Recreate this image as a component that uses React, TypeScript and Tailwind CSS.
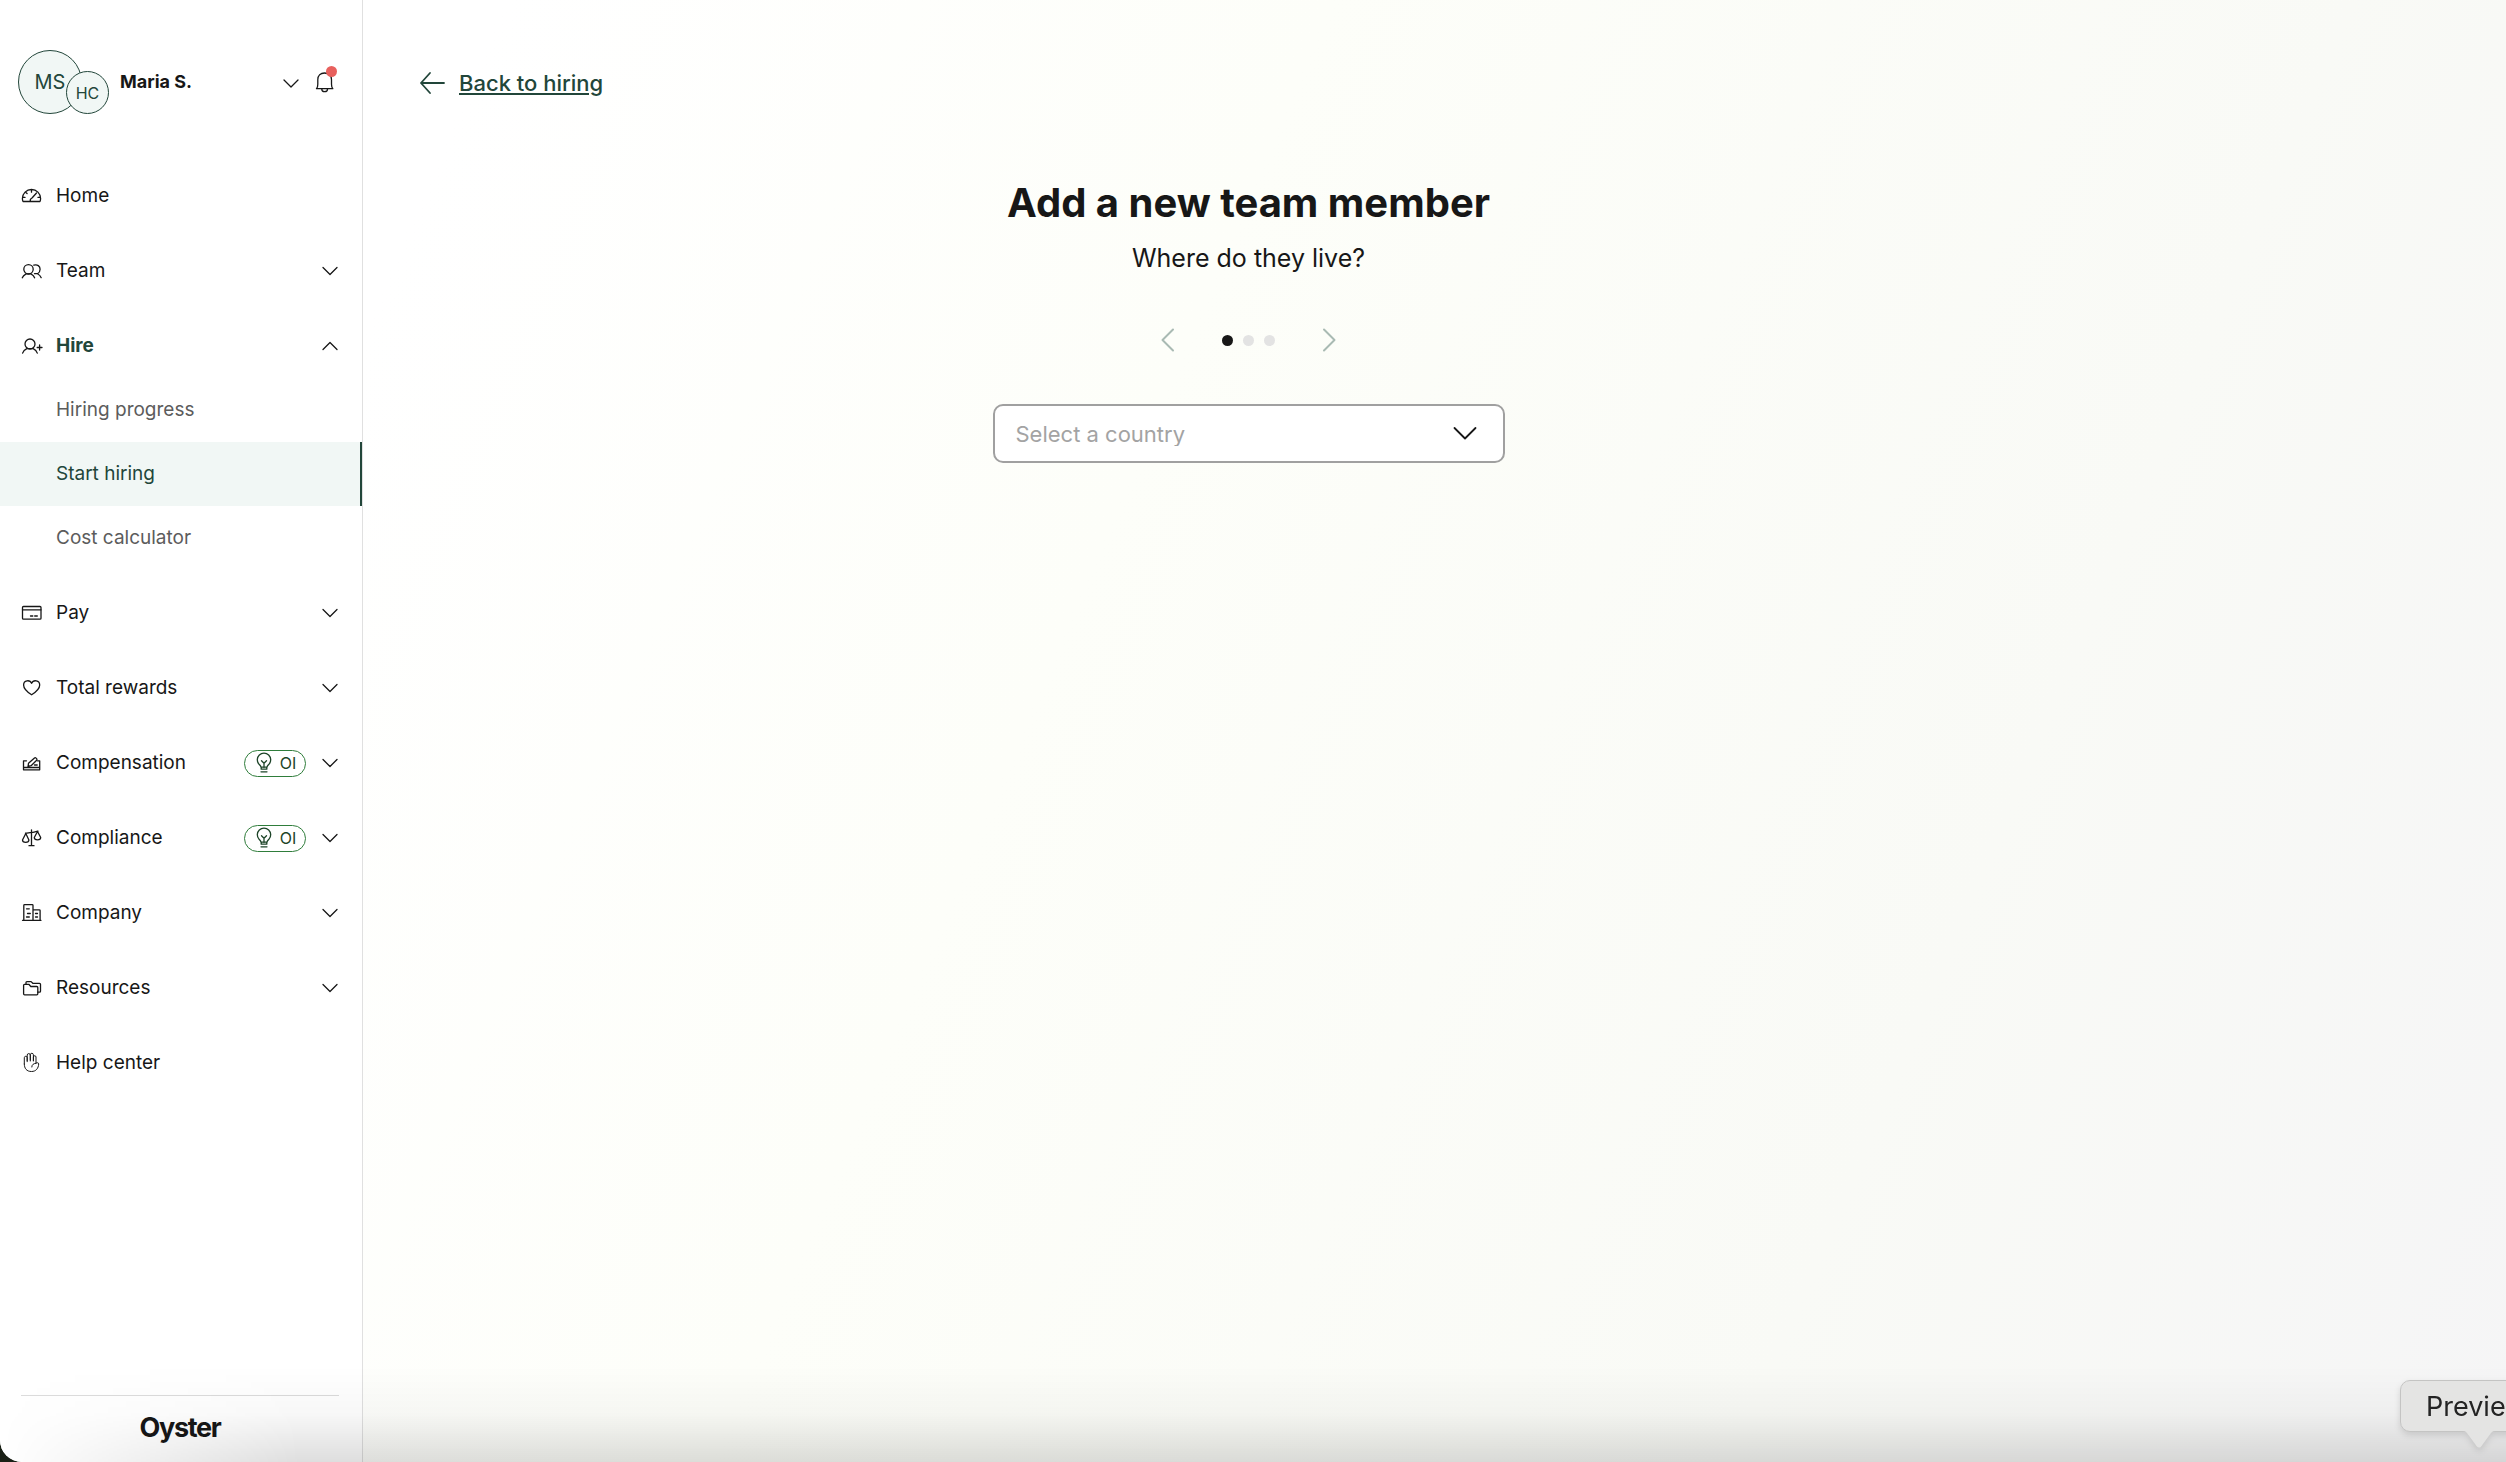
import React from "react";
import clsx from "clsx";

type IconProps = {
  children: React.ReactNode;
  className?: string;
};

const Icon: React.FC<IconProps> = ({ children, className }) => (
  <svg
    viewBox="0 0 24 24"
    fill="none"
    stroke="currentColor"
    strokeWidth="1.3"
    strokeLinecap="round"
    strokeLinejoin="round"
    aria-hidden="true"
    className={clsx("h-6 w-6 shrink-0", className)}
  >
    {children}
  </svg>
);

const icons = {
  home: (
    <>
      <path d="M3 17.5c-.5-.8-.6-1.700-.6-2.900a9.100 9.100 0 0 1 18.200 0c0 1.200-.1 2.100-.6 2.900z" />
      <path d="M11.500 5.700v2.500M2.800 13.400h2.200M18 13.400h2.200M5.800 8.400l1.300 1.200M10.300 17.200c-.3-1.600.3-2.600 1.700-3.200l4.500-5" />
    </>
  ),
  team: (
    <>
      <circle cx="8.500" cy="10.300" r="4.700" />
      <path d="M2.300 18.800c.6-1.800 1.900-3 3.800-4h4.800c1.900 1 3.100 2.200 3.700 4" />
      <path d="M13.800 6.200c3.600-1.200 6.300 1 6.300 4 0 2-.9 3.500-2.600 4.500M14.500 14.700h3c1.800 1 3 2.200 3.700 4" />
    </>
  ),
  hire: (
    <>
      <circle cx="10" cy="10" r="5" />
      <path d="M2.600 19.100c.6-1.900 2-3.300 4.200-4.400h6.400c2.200 1.100 3.500 2.500 4.100 4.400M19.600 11v5M17.200 13.500H22" />
    </>
  ),
  pay: (
    <>
      <rect x="2.500" y="5.500" width="18.500" height="12.700" rx="1" />
      <path d="M2.500 8.800H21M10.500 15h2.300M14.700 15h2.600" />
    </>
  ),
  heart: (
    <path d="M11.600 18.800C8 16.500 3.600 13.200 3.600 9c0-5 6.300-5.600 8-1.700 1.700-3.900 8.100-3.300 8.100 1.700 0 4.200-4.500 7.500-8.100 9.800z" />
  ),
  compensation: (
    <>
      <path d="M6.500 9.800H3.500v9h16.200v-9h-2.200M3.500 16.500h16.200" />
      <path d="M8 15.500l.5-3.200 6-5.400c1-.8 3.200 1.300 2.200 2.300l-5.600 5.500zM14.500 14h2.700" />
    </>
  ),
  compliance: (
    <>
      <path d="M11.500 3.800v15.800M9 19.700h5M5.500 7.200c2.200 0 3.800-.8 6-.8s4-.9 6.500-1.200" />
      <path d="M5.800 7.500L2.500 14c0 3.200 6.400 3.200 6.400 0zM17.500 5.500l-3.200 6c0 3.200 6.400 3.200 6.400 0z" />
    </>
  ),
  company: (
    <>
      <path d="M2.500 19.300h18.500M3.800 19.300V4.500c0-.5.300-.8.800-.8h7.600c.5 0 .8.300.8.800v14.800M13 8.800h6.300c.5 0 .8.300.8.800v9.700" />
      <path d="M6.500 7.800h2.800M7.500 12.500h2.800M6.500 16h2.800M15.500 12.500h2M15.500 16h2" />
    </>
  ),
  resources: (
    <>
      <path d="M3.600 9.300c0-.6.400-1 1-1h4.200l2 2.200h6c.6 0 1 .4 1 1v6.300c0 .6-.4 1-1 1H4.600c-.6 0-1-.4-1-1z" />
      <path d="M6 8.200V6.500c0-.5.400-.9.900-.9h4.200l1.700 1.700h6.700c.6 0 1 .4 1 1v6.900c0 .6-.4 1-1 1h-1.700" />
    </>
  ),
  help: (
    <path
      strokeWidth="1"
      d="M4.300 13V6.700c0-1.900 2.900-1.900 2.900 0v4M7.200 9.500V4c0-1.900 3.100-1.900 3.100 0v6M10.300 9V3.700c0-1.900 3.100-1.900 3.100 0V10M13.400 9.500V6c0-1.700 2.600-1.700 2.600 0v6.200c.8-.8 2.900-.5 2.700.8-.3 4.200-2.600 7.500-7.200 7.500-4.900 0-7.200-3-7.200-7.500M16 12.300c-2.700.2-4.200 1.400-4.200 3.700"
    />
  ),
};

const navItems = [
  { label: "Home", icon: icons.home, link: true },
  { label: "Team", icon: icons.team },
  {
    label: "Hire",
    icon: icons.hire,
    open: true,
    children: ["Hiring progress", "Start hiring", "Cost calculator"],
  },
  { label: "Pay", icon: icons.pay },
  { label: "Total rewards", icon: icons.heart },
  { label: "Compensation", icon: icons.compensation, badge: "OI" },
  { label: "Compliance", icon: icons.compliance, badge: "OI" },
  { label: "Company", icon: icons.company },
  { label: "Resources", icon: icons.resources },
  { label: "Help center", icon: icons.help, link: true },
];

const Badge: React.FC<{ text: string }> = ({ text }) => (
  <span className="flex h-[27px] w-[62px] items-center justify-center gap-1 rounded-full border border-[#2f7d3b] pr-[2px] text-base text-[#1d4428]">
    <Icon>
      <path d="M9 16.200c-.2-1.300-.9-1.900-1.900-2.900a6.700 6.700 0 1 1 9.800 0c-1 1-1.700 1.600-1.900 2.900zM9.200 16.200v2h5.600v-2M9 20.800h6" />
      <path d="M9.500 9.800l2.500 2.400 2.500-2.400M12 12.200v4" />
    </Icon>
    {text}
  </span>
);

const NavItem: React.FC<(typeof navItems)[number]> = ({
  label,
  icon,
  link,
  open,
  badge,
  children,
}) => {
  const rowClass = "flex h-16 w-full items-center gap-3 px-5 text-left";

  if (link)
    return (
      <li>
        <a href="#" className={rowClass}>
          <Icon>{icon}</Icon>
          {label}
        </a>
      </li>
    );

  return (
    <li>
      <button type="button" aria-expanded={!!open} className={rowClass}>
        <Icon>{icon}</Icon>
        <span className={clsx("flex-1", open && "font-bold text-[#22463a]")}>
          {label}
        </span>
        {badge && <Badge text={badge} />}
        <Icon>
          <path d={open ? "M5 15.500l7-7 7 7" : "M5 8.500l7 7 7-7"} />
        </Icon>
      </button>
      {children && (
        <ul>
          {children.map((child) => (
            <li key={child}>
              <a
                href="#"
                className={clsx(
                  "flex h-16 items-center pl-14",
                  child === "Start hiring"
                    ? "border-r-2 border-[#22463a] bg-[#f1f7f5] text-[#22463a]"
                    : "text-[#5c5c5c]"
                )}
              >
                {child}
              </a>
            </li>
          ))}
        </ul>
      )}
    </li>
  );
};

const Sidebar: React.FC = () => (
  <aside className="flex w-[363px] shrink-0 flex-col border-r border-[#e0e0e0] bg-white">
    <div className="flex items-center pl-[18px] pr-[25px] pt-[50px]">
      <div className="flex items-end text-[#22463a]">
        <span className="flex h-16 w-16 items-center justify-center rounded-full border border-[#22463a] bg-[#f1f7f5] text-xl">
          MS
        </span>
        <span className="-ml-4 flex h-[43px] w-[43px] items-center justify-center rounded-full border border-[#22463a] bg-[#f1f7f5] text-base">
          HC
        </span>
      </div>
      <span className="flex-1 pl-[11px] text-lg font-bold">Maria S.</span>
      <button type="button" aria-label="Switch account" className="mr-[10px]">
        <Icon>
          <path d="M5 10l7 7 7-7" />
        </Icon>
      </button>
      <button type="button" aria-label="Notifications" className="relative">
        <Icon>
          <path d="M3.500 18.700c1-1.200 1.300-2.600 1.300-4.500V9.700C4.800 5.500 7.600 3 11.500 3s7 2.500 7 6.700v4.500c0 1.900.3 3.300 1.300 4.500zM8.700 18.700c0 4 5.900 4 5.900 0" />
        </Icon>
        <span className="absolute -top-1 right-0 h-[11px] w-[11px] rounded-full bg-[#e8605d]" />
      </button>
    </div>

    <nav className="flex-1 pt-[50px]">
      <ul className="flex flex-col gap-[11px]">
        {navItems.map((item) => (
          <NavItem key={item.label} {...item} />
        ))}
      </ul>
    </nav>

    <footer className="ml-[21px] mr-[23px] flex h-[67px] justify-center border-t border-[#dcdcdc] pt-[14px]">
      <span className="text-[27px] font-bold leading-9 tracking-tighter">
        Oyster
      </span>
    </footer>
  </aside>
);

const App: React.FC = () => (
  <div className="bg-[#1a2016] font-['Inter',sans-serif]">
    <div className="relative flex min-h-screen overflow-hidden rounded-bl-[22px] bg-white text-[19px] leading-6 text-[#171717]">
      <Sidebar />

      <main className="flex-1 bg-[linear-gradient(113deg,#fff_5%,#fdfef9_35%,#f9faf6_72%,#f5f5f6)]">
        <div className="max-w-[1771px] px-14 pt-[67px]">
          <a
            href="#"
            className="inline-flex items-center gap-[14px] text-[22px] font-medium leading-8 text-[#22463a]"
          >
            <svg
              viewBox="0 0 26 24"
              fill="none"
              stroke="currentColor"
              strokeWidth="1.8"
              strokeLinecap="round"
              strokeLinejoin="round"
              aria-hidden="true"
              className="h-6 w-[26px]"
            >
              <path d="M25 12H2M11 2L2 12l9 10" />
            </svg>
            <span className="underline decoration-2 underline-offset-2">
              Back to hiring
            </span>
          </a>

          <div className="flex flex-col items-center pt-[74px]">
            <h1 className="text-[40px] font-bold leading-[56px]">
              Add a new team member
            </h1>
            <p className="pt-[9px] text-[25px] leading-9">
              Where do they live?
            </p>

            <div className="flex items-center pt-[52px] text-[#a9bab3]">
              <button type="button" aria-label="Previous step">
                <Icon>
                  <path strokeWidth="2" d="M17 1.500L6.500 12 17 22.500" />
                </Icon>
              </button>
              <div className="flex gap-[10px] px-[42px]">
                <span className="h-[11px] w-[11px] rounded-full bg-[#171717]" />
                <span className="h-[11px] w-[11px] rounded-full bg-[#e3e3e3]" />
                <span className="h-[11px] w-[11px] rounded-full bg-[#e3e3e3]" />
              </div>
              <button type="button" aria-label="Next step">
                <Icon>
                  <path strokeWidth="2" d="M7 1.500L17.500 12 7 22.500" />
                </Icon>
              </button>
            </div>

            <div className="relative mt-[52px] w-full max-w-lg">
              <select
                aria-label="Country"
                className="h-[59px] w-full appearance-none rounded-[10px] border-2 border-[#a0a0a0] bg-white pl-[21px] text-[22px] text-[#a3a3a3]"
              >
                <option>Select a country</option>
              </select>
              <Icon className="pointer-events-none absolute right-7 top-[17px] text-[#171717]">
                <path strokeWidth="1.8" d="M1.500 7L12 17.500 22.500 7" />
              </Icon>
            </div>
          </div>
        </div>
      </main>

      <div className="pointer-events-none absolute bottom-0 left-0 h-24 w-full bg-linear-to-t from-black/13 via-black/3 via-50% to-transparent mask-l-from-[88%] mask-l-to-100%" />

      {/* dock label, runs off the right edge */}
      <div className="absolute bottom-[30px] -right-3 h-[52px] w-[118px] rounded-[10px] border border-[#c4c4c3] bg-[#e4e4e3] pl-[25px] text-[27px] leading-[52px] text-[#242424] drop-shadow-md">
        Previe
        <svg
          viewBox="0 0 32 19"
          aria-hidden="true"
          className="absolute left-[62px] top-[49px] h-[19px] w-8"
        >
          <path
            d="M0 1c3 0 4 2 5.500 4l8 11c1.500 2 3.500 2 5 0l8-11C28 3 29 1 32 1V0H0z"
            fill="#e4e4e3"
          />
        </svg>
      </div>
    </div>
  </div>
);

export default App;
